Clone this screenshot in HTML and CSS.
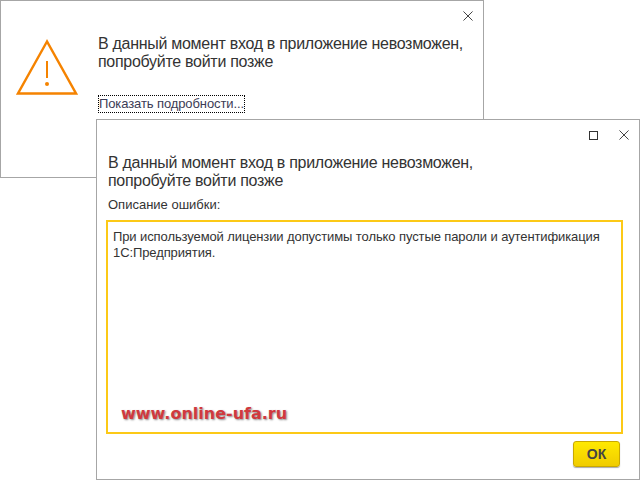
FILE: index.html
```html
<!DOCTYPE html>
<html lang="ru">
<head>
<meta charset="utf-8">
<title>Ошибка</title>
<link rel="stylesheet" href="styles.css">
</head>
<body>
<section class="window back">
  <svg class="close back-close" viewBox="0 0 11 11"><path d="M.5.5l10 10M10.5.5l-10 10"/></svg>
  <svg class="warn" viewBox="0 0 62 56"><path class="warn-tri" d="M31 2.5L2 54.5h58z"/><path class="warn-bar" d="M31 22v17"/><circle class="warn-dot" cx="31" cy="45" r="2"/></svg>
  <div class="back-body">
    <p class="message">В данный момент вход в приложение невозможен,<br>попробуйте войти позже</p>
    <a class="details">Показать подробности...</a>
  </div>
</section>
<section class="window front">
  <div class="controls">
    <span class="maximize"></span>
    <svg class="close" viewBox="0 0 11 11"><path d="M.5.5l10 10M10.5.5l-10 10"/></svg>
  </div>
  <p class="message">В данный момент вход в приложение невозможен,<br>попробуйте войти позже</p>
  <div class="label">Описание ошибки:</div>
  <div class="errorbox">
    <p class="errortext">При используемой лицензии допустимы только пустые пароли и аутентификация 1С:Предприятия.</p>
    <div class="watermark">www.online-ufa.ru</div>
  </div>
  <div class="footer"><button class="ok">ОК</button></div>
</section>
</body>
</html>
```
FILE: styles.css
```css
* { box-sizing: border-box; }
html, body { margin: 0; height: 100%; background: #fff; }
body { position: relative; width: 640px; height: 480px; overflow: hidden; font-family: "Liberation Sans", Arial, sans-serif; color: #333; }
p { margin: 0; }
.window { position: absolute; background: #fff; border: 1px solid #a6a6a6; }
.back { left: 0; top: 0; width: 484px; height: 178px; display: flex; align-items: flex-start; padding: 34px 0 0 15px; }
.front { left: 96px; top: 119px; width: 544px; height: 361px; display: flex; flex-direction: column; padding: 0 19px 0 9px; }
.close { width: 10px; height: 10px; display: block; }
.close path { fill: none; stroke: #444; stroke-width: 1.1; }
.back-close { position: absolute; left: 462px; top: 10px; }
.warn { width: 62px; height: 56px; flex: none; margin-top: 4px; }
.warn-tri { fill: none; stroke: #f58300; stroke-width: 2.4; }
.warn-bar { fill: none; stroke: #f58300; stroke-width: 2; }
.warn-dot { fill: #f58300; }
.back-body { margin-left: 20px; }
.message { font-size: 16px; line-height: 18px; letter-spacing: -.29px; color: #333; }
.details { display: inline-block; margin-top: 24px; height: 18px; padding: 1px 1px 0 1px; font-size: 13px; line-height: 15px; letter-spacing: -.1px; color: #3b3b55; outline: 1px dotted #000; outline-offset: -1px; }
.controls { display: flex; justify-content: flex-end; align-items: center; gap: 21px; height: 14px; margin-top: 8px; margin-right: -9px; }
.maximize { width: 9px; height: 9px; border: 1px solid #333; }
.front .message { margin: 12px 0 0 2px; }
.label { margin: 7px 0 0 2px; font-size: 13px; line-height: 16px; }
.errorbox { margin-top: 7px; width: 517px; height: 214px; border: 2px solid #fcc917; padding: 7px 5px 5px; display: flex; flex-direction: column; justify-content: space-between; }
.errortext { font-size: 13px; line-height: 16px; letter-spacing: -.1px; }
.watermark { margin: 0 0 3px 8px; font-family: "DejaVu Sans", sans-serif; font-weight: 700; font-size: 16px; line-height: 20px; color: #d0393e; text-shadow: 1px 1px 2px #888; }
.footer { display: flex; justify-content: flex-end; margin-top: 7px; }
.ok { width: 47px; height: 26px; padding: 0; border: 1px solid #c9a800; border-radius: 3px; background: linear-gradient(#ffe900, #f0cc00); font: 700 14px/1 "Liberation Sans", sans-serif; color: #444; box-shadow: 0 1px 1px #aaa; }
```
